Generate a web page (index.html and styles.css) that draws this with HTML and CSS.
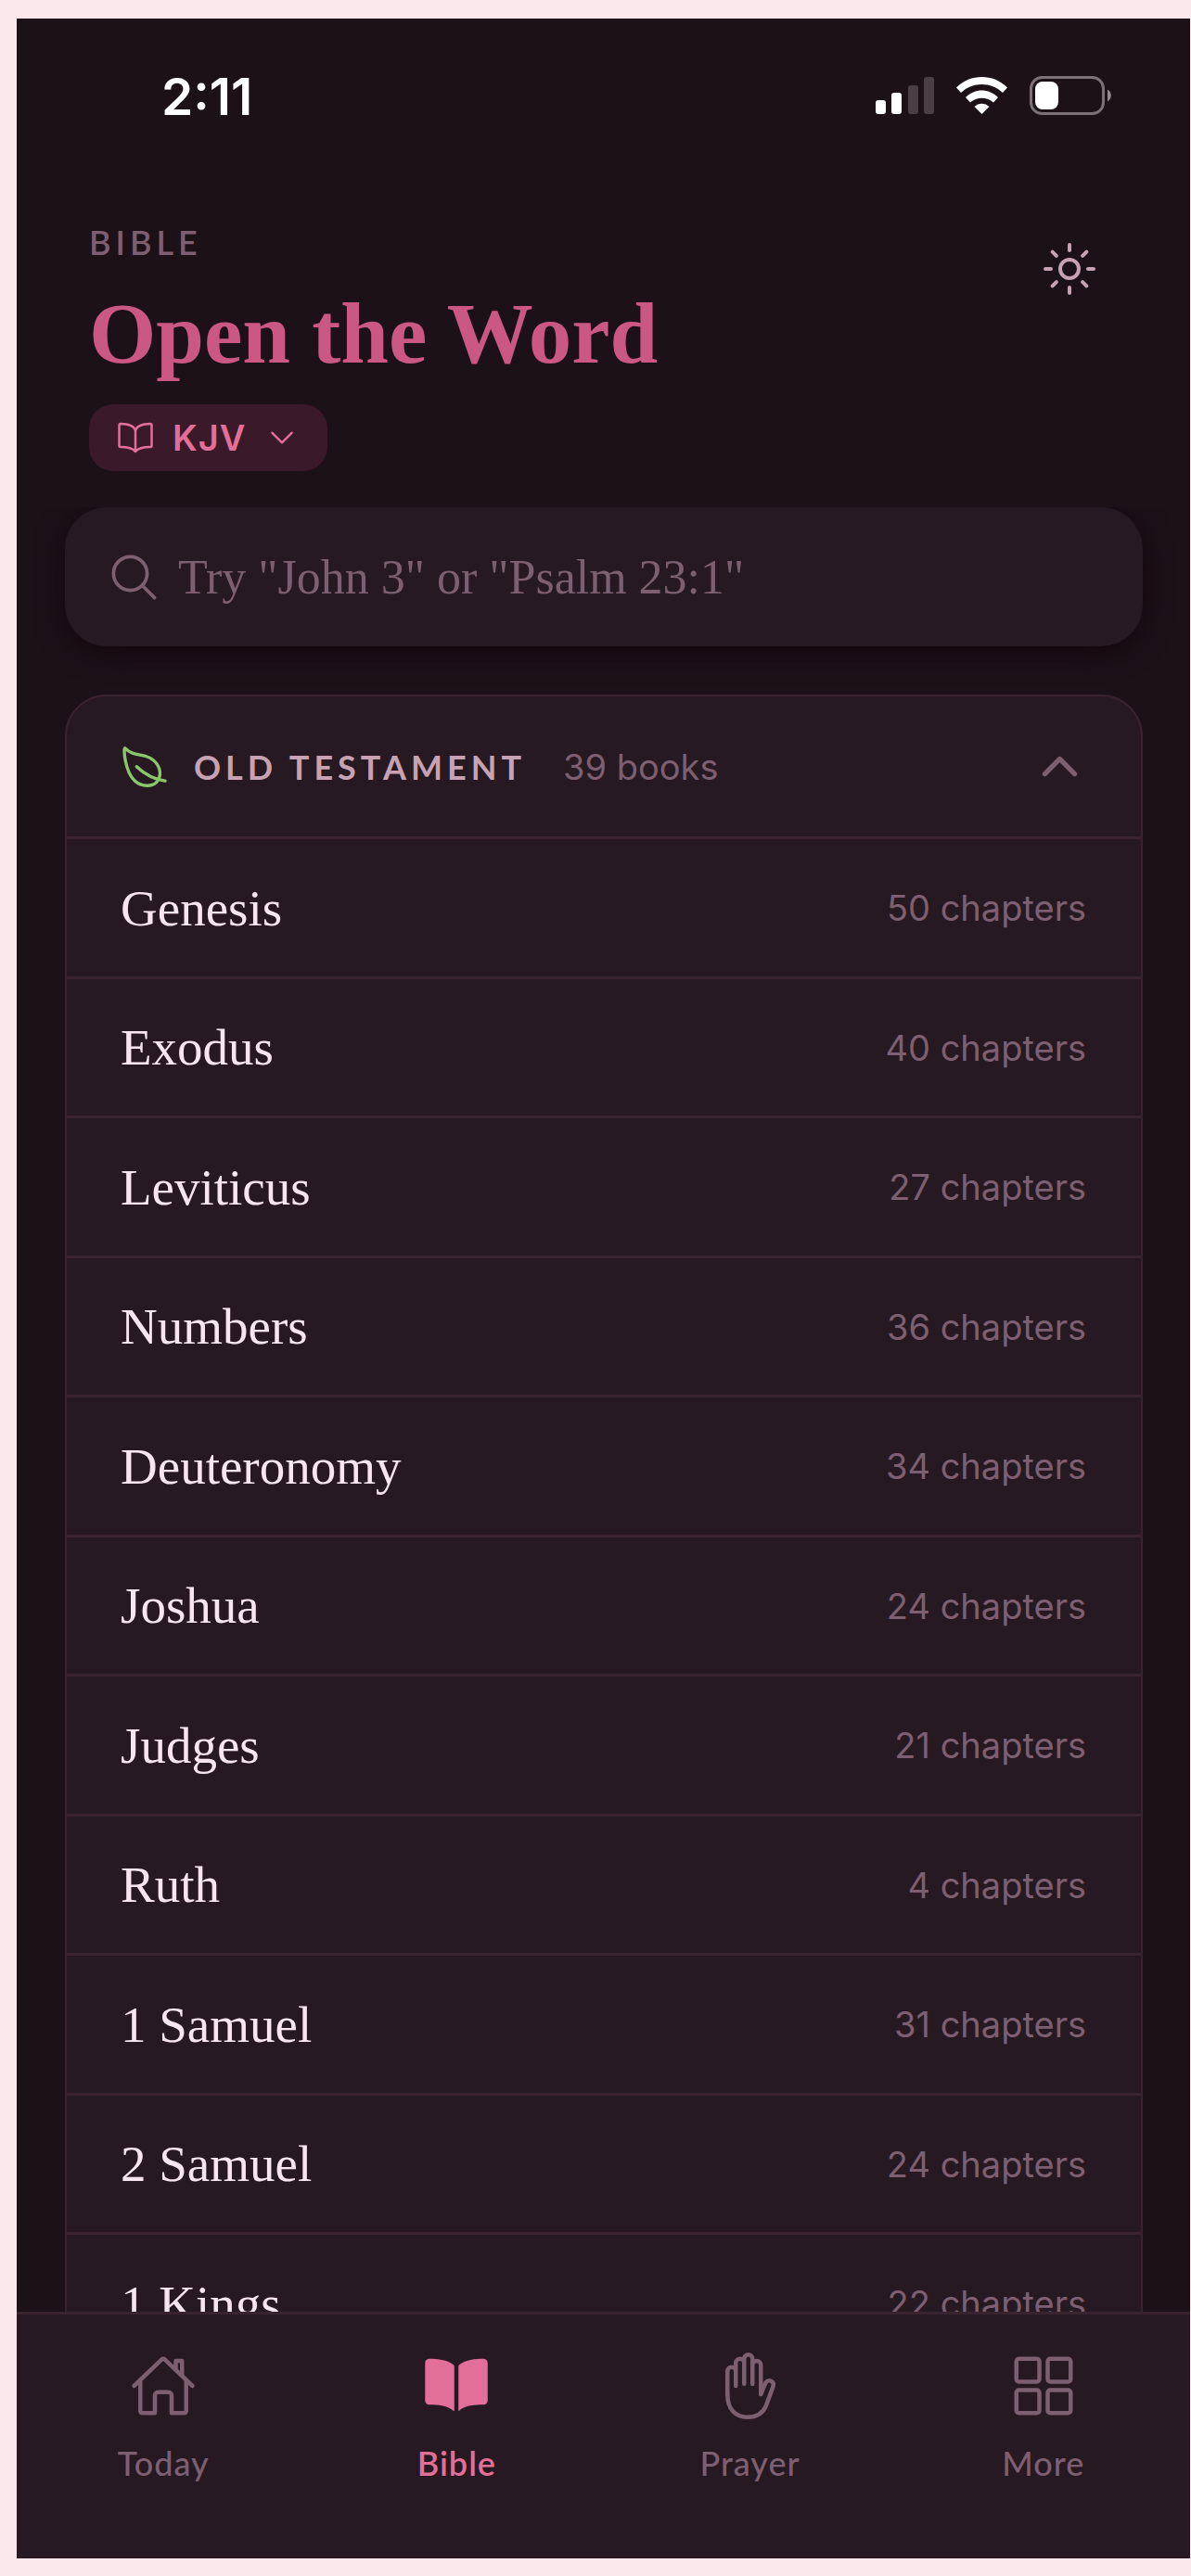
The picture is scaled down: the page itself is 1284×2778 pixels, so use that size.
FILE: index.html
```html
<!DOCTYPE html>
<html lang="en">
  <head>
    <meta charset="UTF-8" />
    <meta name="viewport" content="width=device-width, initial-scale=1.0" />
    <title>Open the Word</title>
    <link rel="stylesheet" href="styles.css">
  </head>
  <body>
    <div class="phone">
      <div class="status">
        <span class="time">2:11</span>
        <div class="statusIcons">
          <svg width="63" height="48" viewBox="0 0 63 48">
            <rect x="0" y="30" width="11" height="15" rx="3" fill="#fff" />
            <rect x="17" y="22" width="11" height="23" rx="3" fill="#fff" />
            <rect x="35" y="14" width="11" height="31" rx="3" fill="#4b3e44" />
            <rect x="52" y="5" width="11" height="40" rx="3" fill="#4b3e44" />
          </svg>
          <svg width="55" height="48" viewBox="0 0 55 48">
            <path fill="#fff" d="M0 16.500C15 1.200 40 1.200 55 16.500L50 22C37.500 10 17.500 10 5 22ZM10 27C20 17 35 17 45 27L40 32.500C33 26 22 26 15 32.500ZM19.500 37C24 32.500 31 32.500 35.500 37L27.500 45Z" />
          </svg>
          <svg width="89" height="48" viewBox="0 0 89 48">
            <rect x="1.500" y="5.500" width="78" height="39" rx="12" fill="none" stroke="#7b7177" stroke-width="3" />
            <rect x="6" y="10" width="25" height="30" rx="8" fill="#fff" />
            <path fill="#948b90" d="M84 18.500a7.500 7.500 0 0 1 0 13z" />
          </svg>
        </div>
      </div>

      <header>
        <div>
          <p class="label">BIBLE</p>
          <h1>Open the Word</h1>
          <button class="version" type="button">
            <svg class="icon" width="40" height="40" viewBox="0 0 512 512">
              <path d="M256 160c16-63.160 76.430-95.410 208-96a15.940 15.940 0 0116 16v288a16 16 0 01-16 16c-128 0-177.450 25.810-208 64-30.370-38-80-64-208-64-9.880 0-16-8.050-16-17.930V80a15.940 15.940 0 0116-16c131.570.590 192 32.840 208 96zM256 160v288" />
            </svg>
            KJV
            <svg class="icon" width="38" height="38" viewBox="0 0 512 512">
              <path d="M112 184l144 144 144-144" />
            </svg>
          </button>
        </div>
        <button class="theme" type="button" aria-label="Light mode">
          <svg class="icon" width="64" height="64" viewBox="0 0 512 512">
            <path d="M256 48v48M256 416v48M403 109l-34 34M143 369l-34 34M464 256h-48M96 256H48M403 403l-34-34M143 143l-34-34" />
            <circle cx="256" cy="256" r="80" />
          </svg>
        </button>
      </header>

      <main>
        <label class="search">
          <svg class="icon" width="59" height="59" viewBox="0 0 512 512">
            <circle cx="221" cy="221" r="157" />
            <path d="M338 338l110 110" />
          </svg>
          <input type="search" aria-label="Search the Bible" placeholder='Try "John 3" or "Psalm 23:1"' />
        </label>

        <section class="card">
          <button class="cardHead" type="button" aria-expanded="true">
            <svg class="icon leaf" width="54" height="54" viewBox="0 0 512 512">
              <path d="M321.890 171.420C233 114 141 155.220 56 65.220c-19.800-21-8.300 235.500 98.100 332.700 77.790 71 197.900 63.080 238.400-5.920s18.280-163.170-70.610-220.580zM173 253c86 81 175 129 292 147" />
            </svg>
            <span class="testament">OLD TESTAMENT</span>
            <span class="count">39 books</span>
            <svg class="icon bold" width="57" height="57" viewBox="0 0 512 512">
              <path d="M112 328l144-144 144 144" />
            </svg>
          </button>
          <ul class="books">
            <li><a href="#genesis">Genesis <span class="count">50 chapters</span></a></li>
            <li><a href="#exodus">Exodus <span class="count">40 chapters</span></a></li>
            <li><a href="#leviticus">Leviticus <span class="count">27 chapters</span></a></li>
            <li><a href="#numbers">Numbers <span class="count">36 chapters</span></a></li>
            <li><a href="#deuteronomy">Deuteronomy <span class="count">34 chapters</span></a></li>
            <li><a href="#joshua">Joshua <span class="count">24 chapters</span></a></li>
            <li><a href="#judges">Judges <span class="count">21 chapters</span></a></li>
            <li><a href="#ruth">Ruth <span class="count">4 chapters</span></a></li>
            <li><a href="#1samuel">1 Samuel <span class="count">31 chapters</span></a></li>
            <li><a href="#2samuel">2 Samuel <span class="count">24 chapters</span></a></li>
            <li><a href="#1kings">1 Kings <span class="count">22 chapters</span></a></li>
          </ul>
        </section>
      </main>

      <nav>
        <a href="#today">
          <svg class="icon" width="72" height="72" viewBox="0 0 512 512">
            <path d="M80 212v236a16 16 0 0016 16h96V328a24 24 0 0124-24h80a24 24 0 0124 24v136h96a16 16 0 0016-16V212M480 256L266.890 52c-5-5.280-16.690-5.340-21.780 0L32 256M400 179V64h-48v69" />
          </svg>
          Today
        </a>
        <a class="active" href="#bible">
          <svg width="72" height="72" viewBox="0 0 512 512" fill="currentColor">
            <path d="M202.240 74C166.110 56.750 115.610 48.300 48 48a31.360 31.360 0 00-17.920 5.330A32 32 0 0016 79.900V366c0 19.340 13.760 33.930 32 33.930 71.070 0 142.360 6.640 185.060 47a4.110 4.110 0 006.940-3V106.820a15.890 15.890 0 00-5.460-12A143 143 0 00202.240 74zM481.920 53.300A31.330 31.330 0 00464 48c-67.610.300-118.110 8.710-154.240 26a143.310 143.310 0 00-32.310 20.780 15.930 15.930 0 00-5.450 12v337.130a3.930 3.930 0 006.680 2.810c25.670-25.500 70.720-46.820 185.360-46.810a32 32 0 0032-32v-288a32 32 0 00-14.120-26.610z" />
          </svg>
          Bible
        </a>
        <a href="#prayer">
          <svg class="icon" width="72" height="72" viewBox="0 0 512 512">
            <path d="M80 320V144a32 32 0 0164 0v112M144 256V80a32 32 0 0164 0v160M272 241V96a32 32 0 0164 0v224M208 240V48a32 32 0 0164 0v192" />
            <path d="M80 320c0 117.400 64 176 152 176s123.710-39.600 144-88l52.710-144c6.660-18.050 3.640-34.790-11.870-43.600s-35.910-4.280-44.310 11.680L336 320" />
          </svg>
          Prayer
        </a>
        <a href="#more">
          <svg class="icon" width="72" height="72" viewBox="0 0 512 512">
            <rect x="48" y="48" width="176" height="176" rx="20" />
            <rect x="288" y="48" width="176" height="176" rx="20" />
            <rect x="48" y="288" width="176" height="176" rx="20" />
            <rect x="288" y="288" width="176" height="176" rx="20" />
          </svg>
          More
        </a>
      </nav>
    </div>
  </body>
</html>
```

FILE: styles.css
```css
* {
  box-sizing: border-box;
}
body {
  margin: 0;
  padding: 20px 1px 19px 18px;
  height: 100vh;
  background: #fbe8ed;
  font-family: Inter, sans-serif;
}
.phone {
  display: flex;
  flex-direction: column;
  height: 100%;
  background: #1d1118;
  color: #7c5f70;
}
button {
  border: 0;
  padding: 0;
  background: none;
  font-family: inherit;
  color: inherit;
}
svg {
  display: block;
  flex: none;
}
.icon {
  fill: none;
  stroke: currentColor;
  stroke-width: 32;
  stroke-linecap: round;
  stroke-linejoin: round;
}
.bold {
  stroke-width: 48;
}
.status {
  display: flex;
  justify-content: space-between;
  align-items: center;
  padding: 52px 84px 0 156px;
}
.time {
  font-size: 55px;
  line-height: 64px;
  font-weight: 600;
  color: #fff;
}
.statusIcons {
  display: flex;
  gap: 24px;
  padding-bottom: 4px;
}
header {
  display: flex;
  justify-content: space-between;
  align-items: flex-start;
  padding: 102px 98px 39px 78px;
}
.label {
  margin: 0;
  font-family: Lato, sans-serif;
  font-size: 36px;
  line-height: 46px;
  font-weight: 600;
  letter-spacing: 5px;
}
h1 {
  margin: 20px 0;
  font-family: "Liberation Serif", serif;
  font-size: 93px;
  line-height: 112px;
  font-weight: bold;
  color: #cb5882;
}
.version {
  display: flex;
  align-items: center;
  gap: 20px;
  padding: 0 30px;
  border-radius: 26px;
  background: #3a1929;
  font-size: 38px;
  line-height: 72px;
  font-weight: 600;
  letter-spacing: 1px;
  color: #e26f98;
}
.theme {
  margin-top: 20px;
  color: #c7a2b3;
}
main {
  flex: 1;
  min-height: 0;
  padding: 0 51px 0 52px;
  overflow: hidden;
}
.search {
  display: flex;
  align-items: center;
  gap: 18px;
  height: 150px;
  margin-bottom: 52px;
  padding: 0 45px;
  border-radius: 45px;
  background: #261921;
  box-shadow: 0 6px 30px rgba(16, 4, 8, 0.7);
}
.search input {
  flex: 1;
  min-width: 0;
  border: 0;
  padding: 0;
  background: none;
  font-family: "Liberation Serif", serif;
  font-size: 52px;
  color: #f8e6ee;
}
.search input::placeholder {
  color: #7c5f70;
  opacity: 1;
}
.card {
  border: 2px solid #38232e;
  border-radius: 45px;
  background: #261921;
}
.cardHead {
  display: flex;
  align-items: center;
  width: 100%;
  height: 151px;
  padding: 0 59px 0 57px;
}
.leaf {
  margin-right: 26px;
  color: #8cc66c;
}
.testament {
  margin-right: 40px;
  font-family: Lato, sans-serif;
  font-size: 36px;
  font-weight: 700;
  letter-spacing: 5px;
  color: #c7a2b3;
}
.cardHead .bold {
  margin-left: auto;
}
.count {
  font-family: Inter, sans-serif;
  font-size: 38px;
}
.books {
  margin: 0;
  padding: 0;
  list-style: none;
}
.books a {
  display: flex;
  justify-content: space-between;
  align-items: center;
  height: 150px;
  padding: 0 59px 0 58px;
  border-top: 3px solid #38232e;
  font-family: "Liberation Serif", serif;
  font-size: 55px;
  color: #f8e6ee;
  text-decoration: none;
}
.books li:nth-child(odd) a {
  height: 151px;
}
.books .count {
  color: #7c5f70;
}
nav {
  display: flex;
  height: 266px;
  padding-top: 41px;
  border-top: 3px solid #38232e;
  background: #261921;
}
nav a {
  flex: 1;
  display: flex;
  flex-direction: column;
  align-items: center;
  gap: 24px;
  font-family: Lato, sans-serif;
  font-size: 36px;
  line-height: 46px;
  font-weight: 500;
  letter-spacing: 1px;
  color: #7c5f70;
  text-decoration: none;
}
nav .active {
  font-weight: 600;
  color: #e26f98;
}
```
